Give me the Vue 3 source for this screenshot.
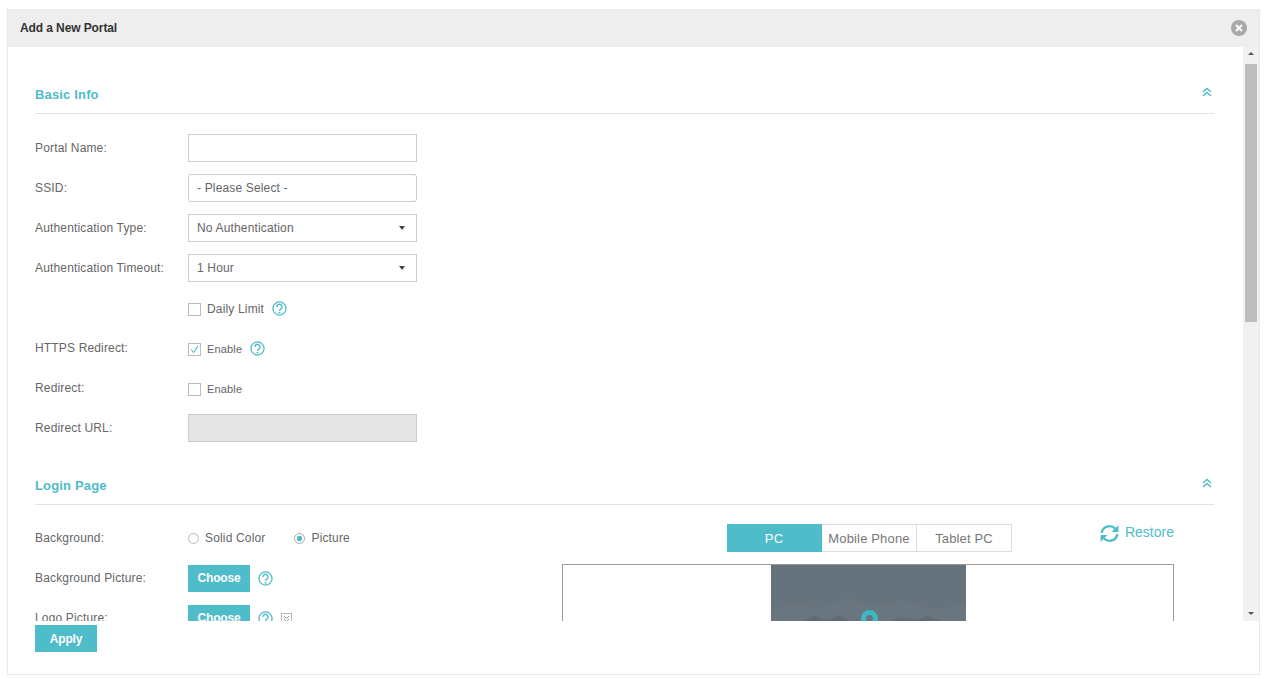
<script setup>
import { ref } from 'vue'

const tabs = ['PC', 'Mobile Phone', 'Tablet PC']
const activeTab = ref('PC')
</script>

<template>
  <div class="page">
    <svg class="defs" width="0" height="0">
      <symbol id="help" viewBox="0 0 16 16">
        <circle cx="8" cy="8" r="7" fill="none" stroke="currentColor" stroke-width="1.4" />
        <path d="M5.300 6.300a2.700 2.700 0 1 1 4.300 2.100c-1 .7-1.600 1-1.600 2.200" fill="none" stroke="currentColor" stroke-width="1.500" />
        <circle cx="8" cy="12.400" r="1" fill="currentColor" />
      </symbol>
      <symbol id="collapse" viewBox="0 0 10 10">
        <path d="M1 5l4-3.500L9 5M1 9l4-3.500L9 9" fill="none" stroke="currentColor" stroke-width="1.500" />
      </symbol>
    </svg>

    <div class="dialog">
      <header class="dialog-head">
        <span>Add a New Portal</span>
        <svg class="close" viewBox="0 0 16 16">
          <circle cx="8" cy="8" r="8" fill="#a9a9a9" />
          <path d="M5 5l6 6M11 5l-6 6" stroke="#fff" stroke-width="2" />
        </svg>
      </header>

      <div class="dialog-body">
        <div class="content">
          <div class="section-head first">
            <span>Basic Info</span>
            <svg class="chevron"><use href="#collapse" /></svg>
          </div>

          <div class="form basic">
            <div class="row">
              <label>Portal Name:</label>
              <div class="field"></div>
            </div>
            <div class="row">
              <label>SSID:</label>
              <div class="field rounded">- Please Select -</div>
            </div>
            <div class="row">
              <label>Authentication Type:</label>
              <div class="field select">No Authentication<i class="caret"></i></div>
            </div>
            <div class="row">
              <label>Authentication Timeout:</label>
              <div class="field select">1 Hour<i class="caret"></i></div>
            </div>
            <div class="row">
              <label></label>
              <span class="check"></span>
              <span class="check-text">Daily Limit</span>
              <svg class="help"><use href="#help" /></svg>
            </div>
            <div class="row">
              <label>HTTPS Redirect:</label>
              <span class="check">
                <svg viewBox="0 0 13 13"><path d="M2.500 6.500l3 3.500 5-7.500" fill="none" stroke="#4fbcc9" stroke-width="1.200" /></svg>
              </span>
              <span class="check-text small">Enable</span>
              <svg class="help"><use href="#help" /></svg>
            </div>
            <div class="row">
              <label>Redirect:</label>
              <span class="check"></span>
              <span class="check-text small">Enable</span>
            </div>
            <div class="row">
              <label>Redirect URL:</label>
              <div class="field disabled"></div>
            </div>
          </div>

          <div class="section-head">
            <span>Login Page</span>
            <svg class="chevron"><use href="#collapse" /></svg>
          </div>

          <div class="login">
            <div class="form login-form">
              <div class="row">
                <label>Background:</label>
                <span class="radio"></span>
                <span class="radio-text">Solid Color</span>
                <span class="radio on"></span>
                <span class="radio-text">Picture</span>
              </div>
              <div class="row">
                <label>Background Picture:</label>
                <button class="btn">Choose</button>
                <svg class="help"><use href="#help" /></svg>
              </div>
              <div class="row">
                <label>Logo Picture:</label>
                <button class="btn">Choose</button>
                <svg class="help"><use href="#help" /></svg>
                <svg class="mini" viewBox="0 0 11 11">
                  <rect x=".5" y=".5" width="10" height="10" fill="none" stroke="#bbb" />
                  <path d="M3 3l2.500 2.500L8 3M3 6l2.500 2.500L8 6" fill="none" stroke="#999" />
                </svg>
              </div>
            </div>

            <div class="preview">
              <div class="preview-top">
                <div class="tabs">
                  <button
                    v-for="tab in tabs"
                    :key="tab"
                    class="tab"
                    :class="{ active: tab === activeTab }"
                    @click="activeTab = tab"
                  >{{ tab }}</button>
                </div>
                <div class="restore">
                  <svg viewBox="0 0 20 20">
                    <path d="M2.500 9.500a7.500 7.500 0 0 1 13-4M17.500 10.500a7.500 7.500 0 0 1-13 4" fill="none" stroke="#4fbcc9" stroke-width="2.200" />
                    <path d="M18.500 2v6.500h-6.500zM1.500 18v-6.500h6.500z" fill="#4fbcc9" />
                  </svg>
                  <span>Restore</span>
                </div>
              </div>
              <div class="canvas">
                <div class="picture">
                  <svg viewBox="0 0 195 60" width="195" height="60">
                    <path d="M0 46l22-8 24 5 30-10 30 9 26-7 28 9 35-4v20H0z" fill="#6a767f" />
                    <path d="M30 57l12-6 14 4 14-5 10 7zM118 57l12-5 14 3 12-4 16 6z" fill="#5f6b75" />
                  </svg>
                  <span class="ring"></span>
                </div>
              </div>
            </div>
          </div>
        </div>

        <div class="scrollbar">
          <i class="arrow up"></i>
          <div class="thumb"></div>
          <i class="arrow down"></i>
        </div>
      </div>

      <footer class="dialog-foot">
        <button class="btn">Apply</button>
      </footer>
    </div>
  </div>
</template>

<style scoped>
.page {
  height: 679px;
  box-sizing: border-box;
  padding: 9px 5px 4px 7px;
  font-family: "Liberation Sans", Arial, sans-serif;
  font-size: 12px;
  letter-spacing: 0.16px;
  color: #666;
}

.defs {
  position: absolute;
}

.dialog {
  height: 100%;
  box-sizing: border-box;
  display: flex;
  flex-direction: column;
  border: 1px solid #e9e9e9;
  border-top: 0;
}

.dialog-head {
  height: 38px;
  flex: none;
  display: flex;
  align-items: center;
  justify-content: space-between;
  padding: 0 12px;
  background: #eee;
  font-weight: 700;
  letter-spacing: -0.1px;
  color: #333;
}

.close {
  width: 16px;
  height: 16px;
}

.dialog-body {
  height: 574px;
  flex: none;
  display: flex;
}

.content {
  flex: 1;
  min-width: 0;
  overflow: hidden;
  padding: 0 29px 0 27px;
}

.section-head {
  height: 40px;
  display: flex;
  align-items: center;
  justify-content: space-between;
  margin-top: 21px;
  border-bottom: 1px solid #e3e3e3;
  font-size: 13px;
  font-weight: 700;
  color: #4fbcc9;
}

.section-head span {
  padding-top: 2px;
}

.section-head.first {
  margin-top: 26px;
}

.chevron {
  width: 10px;
  height: 10px;
  margin: 0 2px 3px 0;
  color: #4fbcc9;
}

.form.basic {
  margin-top: 19px;
  display: flex;
  flex-direction: column;
  gap: 10px;
}

.row {
  height: 30px;
  display: flex;
  align-items: center;
}

.row label {
  width: 153px;
  flex: none;
}

.field {
  width: 229px;
  height: 28px;
  margin-top: 1px;
  box-sizing: border-box;
  align-self: flex-start;
  display: flex;
  align-items: center;
  justify-content: space-between;
  padding: 0 11px 0 8px;
  border: 1px solid #ccc;
  background: #fff;
}

.field.rounded {
  border-radius: 3px;
}

.field.disabled {
  background: #e6e6e6;
}

.caret {
  width: 0;
  height: 0;
  border-left: 3.500px solid transparent;
  border-right: 3.500px solid transparent;
  border-top: 4px solid #444;
}

.check {
  width: 13px;
  height: 13px;
  box-sizing: border-box;
  flex: none;
  border: 1px solid #bbb;
  margin: 2px 6px 0 0;
}

.check svg {
  display: block;
  width: 11px;
  height: 11px;
}

.check-text {
  padding-top: 2px;
}

.check-text.small {
  font-size: 11px;
}

.help {
  width: 15px;
  height: 15px;
  margin-left: 8px;
  color: #4fbcc9;
}

.login {
  display: flex;
  margin-top: 19px;
}

.login-form {
  width: 527px;
  flex: none;
  margin-top: -1px;
  display: flex;
  flex-direction: column;
  gap: 10px;
}

.radio {
  width: 11px;
  height: 11px;
  box-sizing: border-box;
  flex: none;
  border: 1px solid #bbb;
  border-radius: 50%;
  margin-right: 6px;
}

.radio.on {
  border-color: #aaa;
  background: radial-gradient(circle, #4fbcc9 0 2.500px, #fff 3px);
}

.radio-text {
  margin-right: 29px;
}

.btn {
  width: 62px;
  height: 27px;
  flex: none;
  padding: 0;
  border: 0;
  background: #4fbcc9;
  color: #fff;
  font-family: inherit;
  font-size: 12px;
  font-weight: 700;
  letter-spacing: -0.2px;
}

.mini {
  width: 11px;
  height: 11px;
  margin-left: 8px;
}

.preview {
  width: 612px;
  flex: none;
}

.preview-top {
  display: flex;
  justify-content: space-between;
  padding-left: 165px;
}

.tabs {
  display: flex;
  height: 28px;
}

.tab {
  width: 95px;
  box-sizing: border-box;
  padding: 0;
  border: 1px solid #ddd;
  border-left: 0;
  background: #fff;
  color: #777;
  font-family: inherit;
  font-size: 13px;
  letter-spacing: 0.15px;
}

.tab.active {
  background: #4fbcc9;
  border-color: #4fbcc9;
  color: #fff;
}

.restore {
  display: flex;
  align-items: flex-start;
  gap: 5px;
  color: #4fbcc9;
  font-size: 14px;
  line-height: 16px;
  letter-spacing: 0;
}

.restore svg {
  width: 21px;
  height: 21px;
  margin-top: -1px;
}

.canvas {
  height: 300px;
  margin-top: 12px;
  box-sizing: border-box;
  padding-left: 208px;
  border: 1px solid #999;
}

.picture {
  position: relative;
  width: 195px;
  height: 298px;
  background: #66727c;
}

.picture svg {
  display: block;
}

.ring {
  position: absolute;
  left: 90px;
  top: 45px;
  width: 17px;
  height: 17px;
  box-sizing: border-box;
  border: 5px solid #3fb8c6;
  border-radius: 50%;
}

.scrollbar {
  width: 16px;
  flex: none;
  display: flex;
  flex-direction: column;
  align-items: center;
  background: #f1f1f1;
}

.thumb {
  width: 12px;
  height: 258px;
  margin-top: 9px;
  background: #bdbdbd;
}

.arrow {
  width: 0;
  height: 0;
  border-left: 3.500px solid transparent;
  border-right: 3.500px solid transparent;
}

.arrow.up {
  margin-top: 5px;
  border-bottom: 3.500px solid #555;
}

.arrow.down {
  margin-top: auto;
  margin-bottom: 6px;
  border-top: 3.500px solid #555;
}

.dialog-foot {
  flex: 1;
  padding: 4px 27px 0;
}
</style>

<style>
html,
body {
  margin: 0;
  background: #fff;
}
</style>
